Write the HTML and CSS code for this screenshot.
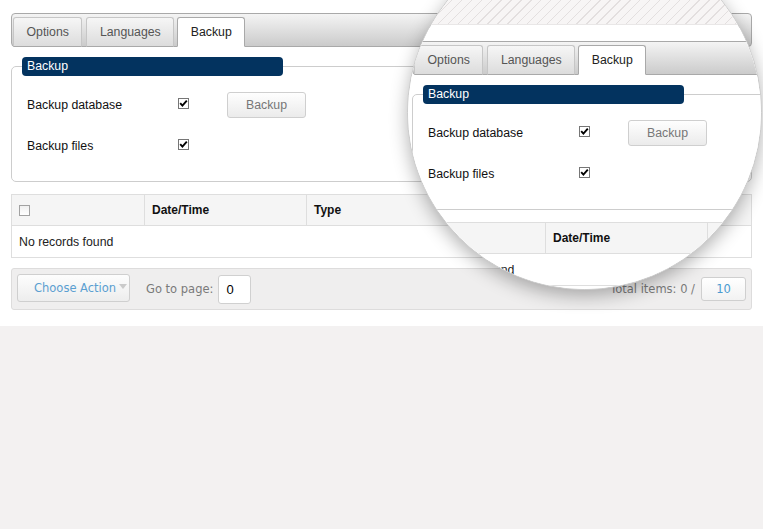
FILE: index.html
```html
<!DOCTYPE html>
<html lang="en">
<head>
  <meta charset="UTF-8">
  <title>Backup</title>
  <link rel="stylesheet" href="styles.css">
</head>
<body>
  <div class="page">
    <div class="tabs">
      <span class="tab">Options</span>
      <span class="tab">Languages</span>
      <span class="tab active">Backup</span>
    </div>

    <fieldset class="box">
      <legend>Backup</legend>
      <div class="row">
        <span class="label">Backup database</span>
        <span class="cb"><svg width="9" height="9" viewBox="0 0 9 9"><path d="M1.2 4.2 L3.4 6.6 L7.8 1.6" fill="none" stroke="#000" stroke-width="1.9"/></svg></span>
        <button class="btn">Backup</button>
      </div>
      <div class="row">
        <span class="label">Backup files</span>
        <span class="cb"><svg width="9" height="9" viewBox="0 0 9 9"><path d="M1.2 4.2 L3.4 6.6 L7.8 1.6" fill="none" stroke="#000" stroke-width="1.9"/></svg></span>
      </div>
    </fieldset>

    <table class="grid">
      <thead>
        <tr>
          <th class="col-check"><span class="cb empty"></span></th>
          <th class="col-date">Date/Time</th>
          <th>Type</th>
        </tr>
      </thead>
      <tbody>
        <tr><td colspan="3">No records found</td></tr>
      </tbody>
    </table>

    <div class="pager">
      <button class="action">Choose Action<span class="caret"></span></button>
      <span class="pager-label">Go to page:</span>
      <input class="page-input" type="text" value="0">
      <span class="total">Total items: 0 /</span>
      <span class="size">10</span>
    </div>
  </div>

  <div class="lens">
    <div class="lens-hatch"></div>
    <div class="page lens-page">
      <div class="tabs">
        <span class="tab">Options</span>
        <span class="tab">Languages</span>
        <span class="tab active">Backup</span>
      </div>

      <fieldset class="box">
        <legend>Backup</legend>
        <div class="row">
          <span class="label">Backup database</span>
          <span class="cb"><svg width="9" height="9" viewBox="0 0 9 9"><path d="M1.2 4.2 L3.4 6.6 L7.8 1.6" fill="none" stroke="#000" stroke-width="1.9"/></svg></span>
          <button class="btn">Backup</button>
        </div>
        <div class="row">
          <span class="label">Backup files</span>
          <span class="cb"><svg width="9" height="9" viewBox="0 0 9 9"><path d="M1.2 4.2 L3.4 6.6 L7.8 1.6" fill="none" stroke="#000" stroke-width="1.9"/></svg></span>
        </div>
      </fieldset>

      <table class="grid">
        <thead>
          <tr>
            <th class="col-check"><span class="cb empty"></span></th>
            <th class="col-date">Date/Time</th>
            <th>Type</th>
          </tr>
        </thead>
        <tbody>
          <tr><td colspan="3">No records found</td></tr>
        </tbody>
      </table>

      <div class="pager">
        <button class="action">Choose Action<span class="caret"></span></button>
        <span class="pager-label">Go to page:</span>
        <input class="page-input" type="text" value="0">
        <span class="total">Total items: 0 /</span>
        <span class="size">10</span>
      </div>
    </div>
  </div>
</body>
</html>
```

FILE: styles.css
```css
* {
  box-sizing: border-box;
}
html, body {
  margin: 0;
  background: #f3f1f1;
}
body {
  font-family: "Liberation Sans", Arial, sans-serif;
  font-size: 12.3px;
  color: #111;
  overflow: hidden;
}
.page {
  width: 763px;
  background: #fff;
  padding: 13px 11px 16px;
  box-shadow: 0 1px 3px rgba(0,0,0,0.18);
}

/* tabs */
.tabs {
  display: flex;
  align-items: flex-end;
  gap: 3px;
  height: 34px;
  padding: 0 1px;
  border: 1px solid #a9a9a9;
  border-radius: 4px;
  background: linear-gradient(#f4f4f4, #cbcbcb);
}
.tab {
  height: 30px;
  margin-bottom: -1px;
  padding: 0 12.5px;
  line-height: 28px;
  border: 1px solid #c6c6c6;
  border-bottom-color: #a9a9a9;
  border-radius: 3px 3px 0 0;
  background: linear-gradient(#f6f6f6, #dcdcdc);
  color: #555;
}
.tab:first-child {
  margin-right: 1px;
}
.tab.active {
  background: #fff;
  color: #222;
  border-color: #a9a9a9;
  border-bottom-color: #fff;
}

/* backup box */
.box {
  margin: 10px 0 0;
  padding: 16px 10px 22px;
  border: 1px solid #cdcdcd;
  border-radius: 5px;
  min-width: 0;
}
.box legend {
  width: 261px;
  height: 19px;
  padding: 0 5px;
  line-height: 19px;
  background: #03335f;
  color: #fff;
  border-radius: 4px;
}
.row {
  display: flex;
  align-items: center;
  height: 26px;
  padding-left: 5px;
}
.row + .row {
  margin-top: 15px;
}
.label {
  width: 151px;
}
.cb {
  display: inline-flex;
  align-items: center;
  justify-content: center;
  width: 11px;
  height: 11px;
  margin-bottom: 3px;
  border: 1px solid #767676;
  background: #fff;
}
.cb.empty {
  margin: 0;
  border-color: #a2a2a2;
  background: linear-gradient(#f0f0f0, #fff);
}
.btn {
  margin-left: 38px;
  width: 79px;
  height: 26px;
  border: 1px solid #cfcfcf;
  border-radius: 3px;
  background: linear-gradient(#fefefe, #ebebeb);
  color: #777;
  font: inherit;
}

/* grid */
.grid {
  width: 100%;
  margin-top: 12px;
  border-collapse: collapse;
  border: 1px solid #dedede;
}
.grid th, .grid td {
  height: 31px;
  padding: 0 7px;
  text-align: left;
  border: 1px solid #dedede;
}
.grid th {
  background: #f5f5f5;
  font-size: 12px;
  font-weight: bold;
}
.grid th .cb {
  vertical-align: middle;
}
.grid td {
  height: 32px;
  color: #222;
}
.col-check {
  width: 133px;
}
.col-date {
  width: 162px;
}

/* pager */
.pager {
  display: flex;
  align-items: center;
  height: 42px;
  margin-top: 10px;
  padding: 0 5px;
  border: 1px solid #dddcdc;
  border-radius: 3px;
  background: #efeeee;
  font-family: "DejaVu Sans", Verdana, sans-serif;
  font-size: 11.5px;
  color: #7a7a7a;
}
.action {
  display: flex;
  align-items: center;
  width: 113px;
  height: 28px;
  margin-top: -2px;
  padding: 0 0 0 16px;
  border: 1px solid #cfcfcf;
  border-radius: 3px;
  background: linear-gradient(#fdfdfd, #ededed);
  color: #5b9fd1;
  font: inherit;
}
.caret {
  margin-left: 3px;
  margin-bottom: 4px;
  border-left: 4px solid transparent;
  border-right: 4px solid transparent;
  border-top: 5px solid #cacaca;
}
.pager-label {
  margin-left: 16px;
}
.page-input {
  width: 33px;
  height: 29px;
  margin-left: 5px;
  padding: 0 0 0 7px;
  border: 1px solid #d0d0d0;
  border-radius: 3px;
  background: #fff;
  font: 13px "Liberation Sans", Arial, sans-serif;
  color: #000;
}
.total {
  margin-left: auto;
}
.size {
  width: 45px;
  height: 24px;
  margin-left: 6px;
  line-height: 22px;
  text-align: center;
  border: 1px solid #cfcfcf;
  border-radius: 3px;
  background: linear-gradient(#fff, #f2f2f2);
  color: #4b9bd1;
}

/* magnifier */
.lens {
  position: absolute;
  left: 407px;
  top: -65px;
  width: 355px;
  height: 355px;
  border-radius: 50%;
  overflow: hidden;
  background: #fff;
  border: 1px solid #cbcbcb;
  box-shadow: 0 6px 18px rgba(0,0,0,0.3);
}
.lens-hatch {
  position: absolute;
  left: 0;
  top: 0;
  right: 0;
  height: 89px;
  background: repeating-linear-gradient(135deg, #f7f5f5 0 6px, #e3dfdf 6px 7px);
  border-bottom: 1px solid #e9e7e7;
}
.lens-page {
  position: absolute;
  left: -7px;
  top: 92px;
  box-shadow: none;
}
```
